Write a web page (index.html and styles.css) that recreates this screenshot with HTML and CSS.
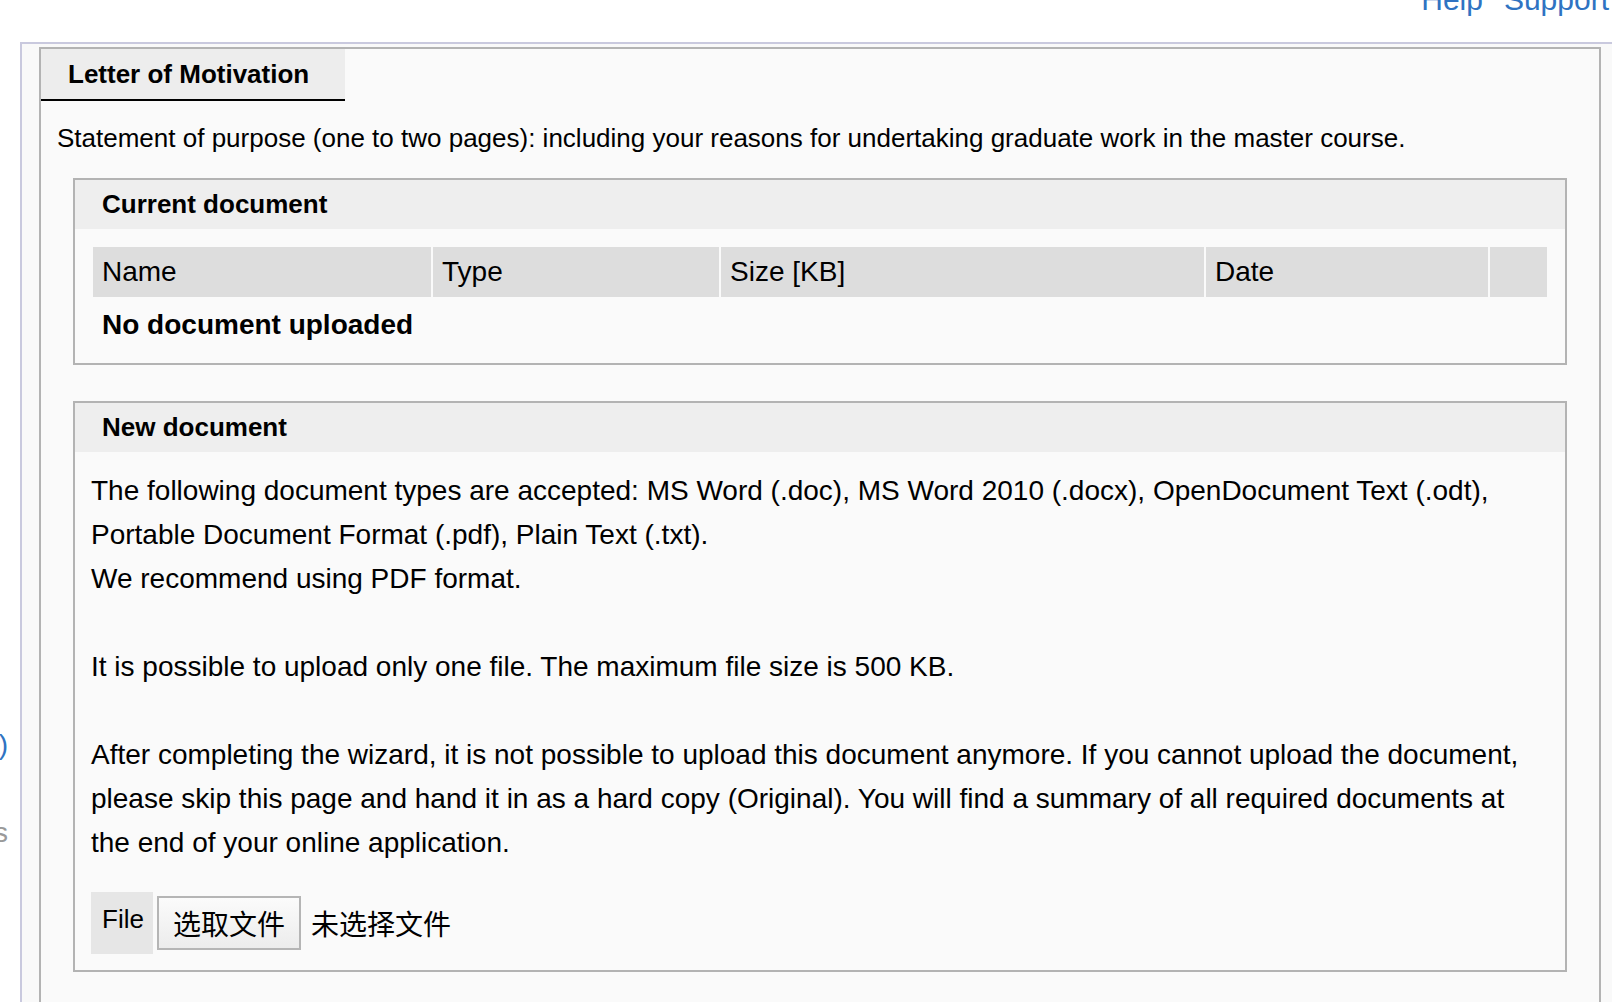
FILE: index.html
```html
<!DOCTYPE html>
<html lang="en">
<head>
<meta charset="utf-8">
<title>Letter of Motivation</title>
<link rel="stylesheet" href="styles.css">
</head>
<body>
<header class="topbar">
  <nav class="toplinks">
    <a class="toplink" href="#">Help</a>
    <a class="toplink" href="#">Support</a>
  </nav>
</header>
<div class="wrap">
  <aside class="sidebar">
    <div class="side-item side-link">Documents (1)</div>
    <div class="side-item side-muted">Uploads</div>
  </aside>
  <main class="content">
    <section class="panel">
      <div class="tabs">
        <div class="tab">Letter of Motivation</div>
      </div>
      <p class="intro">Statement of purpose (one to two pages): including your reasons for undertaking graduate work in the master course.</p>

      <div class="box">
        <div class="box-head">Current document</div>
        <div class="box-body">
          <table class="doc-table">
            <colgroup>
              <col class="col-name">
              <col class="col-type">
              <col class="col-size">
              <col class="col-date">
              <col class="col-act">
            </colgroup>
            <thead>
              <tr>
                <th>Name</th>
                <th>Type</th>
                <th>Size [KB]</th>
                <th>Date</th>
                <th></th>
              </tr>
            </thead>
            <tbody>
              <tr>
                <td class="empty" colspan="5">No document uploaded</td>
              </tr>
            </tbody>
          </table>
        </div>
      </div>

      <div class="box box-new">
        <div class="box-head">New document</div>
        <div class="box-body box-text">
          <p class="para">The following document types are accepted: MS Word (.doc), MS Word 2010 (.docx), OpenDocument Text (.odt), Portable Document Format (.pdf), Plain Text (.txt).<br>We recommend using PDF format.</p>
          <p class="para">It is possible to upload only one file. The maximum file size is 500 KB.</p>
          <p class="para para-last">After completing the wizard, it is not possible to upload this document anymore. If you cannot upload the document, please skip this page and hand it in as a hard copy (Original). You will find a summary of all required documents at the end of your online application.</p>
          <div class="file-row">
            <label class="file-label">File</label>
            <span class="file-btn">选取文件</span>
            <span class="file-name">未选择文件</span>
          </div>
        </div>
      </div>
    </section>
  </main>
</div>
</body>
</html>
```

FILE: styles.css
```css
html, body {
  margin: 0;
  padding: 0;
  height: 100%;
  overflow: hidden;
}

body {
  background: #ffffff;
  color: #000000;
  font-family: "Liberation Sans", Arial, "Noto Sans CJK SC", sans-serif;
  font-size: 28px;
}

/* ---------- top bar ---------- */
.topbar {
  height: 42px;
  display: flex;
  justify-content: flex-end;
  align-items: flex-start;
}

.toplinks {
  display: flex;
  gap: 21px;
  margin-top: -17px;
  margin-right: 3px;
  white-space: nowrap;
}

.toplink {
  font-size: 30px;
  line-height: 34px;
  color: #2f73c2;
  text-decoration: none;
}

/* ---------- layout ---------- */
.wrap {
  display: flex;
  height: calc(100% - 42px);
}

.sidebar {
  width: 20px;
  flex: none;
  overflow: hidden;
  padding-top: 688px;
  box-sizing: border-box;
}

.side-item {
  width: 8px;
  display: flex;
  justify-content: flex-end;
  white-space: nowrap;
  font-size: 28px;
  line-height: 30px;
}

.side-link {
  color: #2f73c2;
}

.side-muted {
  color: #9a9a9a;
  margin-top: 58px;
}

.content {
  flex: 1;
  border-top: 2px solid #c9c9de;
  border-left: 2px solid #c9c9de;
  background: #f9f9f9;
  padding: 3px 11px 0 17px;
  overflow: hidden;
}

.panel {
  border: 2px solid #b3b3b3;
  border-bottom: none;
  background: #fafafa;
  padding-bottom: 200px;
}

/* ---------- tab ---------- */
.tabs {
  display: flex;
}

.tab {
  width: 277px;
  height: 50px;
  padding-left: 27px;
  display: flex;
  align-items: center;
  background: #ededed;
  border-bottom: 2px solid #000000;
  font-weight: bold;
  font-size: 26px;
}

.intro {
  margin: 22px 0 0 16px;
  font-size: 26px;
  line-height: 30px;
}

/* ---------- boxes ---------- */
.box {
  margin: 25px 32px 0 32px;
  border: 2px solid #b3b3b3;
  background: #fafafa;
}

.box-new {
  margin-top: 36px;
}

.box-head {
  height: 49px;
  display: flex;
  align-items: center;
  padding-left: 27px;
  background: #eeeeee;
  font-weight: bold;
  font-size: 26px;
}

.box-body {
  padding: 16px 16px 10px 16px;
}

.box-text {
  padding: 17px 16px 16px 16px;
}

/* ---------- table ---------- */
.doc-table {
  width: 1458px;
  table-layout: fixed;
  border-collapse: separate;
  border-spacing: 2px;
  font-size: 28px;
}

.col-name { width: 338px; }
.col-type { width: 286px; }
.col-size { width: 483px; }
.col-date { width: 282px; }
.col-act  { width: 57px; }

.doc-table th {
  height: 50px;
  padding: 0 9px;
  background: #dddddd;
  font-weight: normal;
  text-align: left;
  line-height: 32px;
}

.doc-table td.empty {
  padding: 10px 9px;
  line-height: 32px;
  font-weight: bold;
}

/* ---------- new document text ---------- */
.para {
  margin: 0 0 44px 0;
  line-height: 44px;
  font-size: 28px;
}

.para-last {
  margin-bottom: 0;
}

/* ---------- file input ---------- */
.file-row {
  margin-top: 27px;
  display: flex;
  align-items: center;
}

.file-label {
  width: 62px;
  height: 62px;
  box-sizing: border-box;
  padding: 12px 0 0 11px;
  background: #e6e6e6;
  font-size: 26px;
  line-height: 30px;
}

.file-btn {
  margin-left: 4px;
  height: 54px;
  box-sizing: border-box;
  padding: 0 14px;
  display: flex;
  align-items: center;
  border: 2px solid #b5b5b5;
  background: linear-gradient(#fbfbfb, #ececec);
  font-family: "Noto Sans CJK SC", sans-serif;
  font-size: 28px;
}

.file-name {
  margin-left: 10px;
  font-family: "Noto Sans CJK SC", sans-serif;
  font-size: 28px;
}
```
